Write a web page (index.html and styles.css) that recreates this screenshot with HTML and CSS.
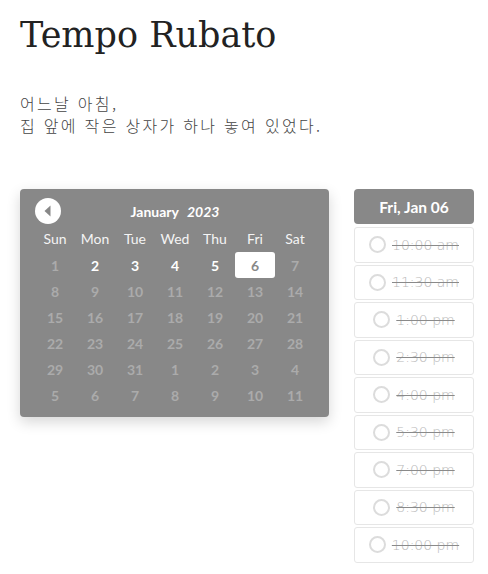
FILE: index.html
```html
<!DOCTYPE html>
<html lang="ko">
<head>
<meta charset="utf-8">
<title>Tempo Rubato</title>
<link rel="stylesheet" href="styles.css">
</head>
<body>
<div class="page">
  <h1 class="title">Tempo Rubato</h1>
  <p class="intro">어느날 아침,<br>집 앞에 작은 상자가 하나 놓여 있었다.</p>
  <div class="booking">
    <div class="calendar">
      <div class="cal-head">
        <button class="nav-btn" aria-label="Previous month">
          <svg width="26" height="26" viewBox="0 0 26 26"><circle cx="13" cy="13" r="13" fill="#fff"/><path d="M15.5 7.5 L9.5 13 L15.5 18.5 Z" fill="#888"/></svg>
        </button>
        <div class="month"><span class="m-name">January</span><span class="m-year">2023</span></div>
      </div>
      <div class="grid">
        <div class="wd">Sun</div><div class="wd">Mon</div><div class="wd">Tue</div><div class="wd">Wed</div><div class="wd">Thu</div><div class="wd">Fri</div><div class="wd">Sat</div>
        <div class="d off">1</div><div class="d on">2</div><div class="d on">3</div><div class="d on">4</div><div class="d on">5</div><div class="d sel"><span>6</span></div><div class="d off">7</div>
        <div class="d off">8</div><div class="d off">9</div><div class="d off">10</div><div class="d off">11</div><div class="d off">12</div><div class="d off">13</div><div class="d off">14</div>
        <div class="d off">15</div><div class="d off">16</div><div class="d off">17</div><div class="d off">18</div><div class="d off">19</div><div class="d off">20</div><div class="d off">21</div>
        <div class="d off">22</div><div class="d off">23</div><div class="d off">24</div><div class="d off">25</div><div class="d off">26</div><div class="d off">27</div><div class="d off">28</div>
        <div class="d off">29</div><div class="d off">30</div><div class="d off">31</div><div class="d off">1</div><div class="d off">2</div><div class="d off">3</div><div class="d off">4</div>
        <div class="d off">5</div><div class="d off">6</div><div class="d off">7</div><div class="d off">8</div><div class="d off">9</div><div class="d off">10</div><div class="d off">11</div>
      </div>
    </div>
    <div class="slots">
      <div class="slot-head">Fri, Jan 06</div>
      <div class="slot"><span class="radio"></span><span class="time">10:00 am</span></div>
      <div class="slot"><span class="radio"></span><span class="time">11:30 am</span></div>
      <div class="slot"><span class="radio"></span><span class="time">1:00 pm</span></div>
      <div class="slot"><span class="radio"></span><span class="time">2:30 pm</span></div>
      <div class="slot"><span class="radio"></span><span class="time">4:00 pm</span></div>
      <div class="slot"><span class="radio"></span><span class="time">5:30 pm</span></div>
      <div class="slot"><span class="radio"></span><span class="time">7:00 pm</span></div>
      <div class="slot"><span class="radio"></span><span class="time">8:30 pm</span></div>
      <div class="slot"><span class="radio"></span><span class="time">10:00 pm</span></div>
    </div>
  </div>
</div>
</body>
</html>
```
FILE: styles.css
```css
html, body {
  margin: 0;
  padding: 0;
  background: #fff;
}
.page {
  padding: 13px 0 0 20px;
}
.title {
  margin: 0;
  font-family: "DejaVu Serif", serif;
  font-weight: normal;
  font-size: 35px;
  line-height: 44px;
  color: #222;
}
.intro {
  margin: 35px 0 0 0;
  font-family: "Noto Sans CJK KR", sans-serif;
  font-weight: 300;
  font-size: 16px;
  line-height: 22px;
  letter-spacing: 2.3px;
  color: #444;
}
.booking {
  display: flex;
  align-items: flex-start;
  gap: 25px;
  margin-top: 53px;
}
.calendar {
  width: 309px;
  flex-shrink: 0;
  box-sizing: border-box;
  padding: 9px 14px 9px 15px;
  background: #888;
  border-radius: 4px;
  box-shadow: 0 5px 14px rgba(0, 0, 0, 0.16);
  font-family: "Lato", sans-serif;
  color: #fff;
}
.cal-head {
  position: relative;
  height: 26px;
  display: flex;
  align-items: center;
  justify-content: center;
}
.nav-btn {
  position: absolute;
  left: 0;
  top: 0;
  width: 26px;
  height: 26px;
  padding: 0;
  border: 0;
  background: none;
  display: block;
}
.nav-btn svg { display: block; }
.month {
  font-size: 14px;
  font-weight: 700;
  display: flex;
  gap: 8px;
}
.m-year { font-style: italic; }
.grid {
  display: grid;
  grid-template-columns: repeat(7, 40px);
  grid-template-rows: 28px;
  grid-auto-rows: 26px;
}
.wd, .d {
  display: flex;
  align-items: center;
  justify-content: center;
  font-size: 14px;
}
.wd {
  font-weight: 400;
  color: #f4f4f4;
}
.d { font-weight: 700; }
.d.off { color: #ababab; }
.d.on { color: #fff; }
.d.sel {
  background: #fff;
  color: #888;
  border-radius: 3px;
}
.slots {
  width: 120px;
  flex-shrink: 0;
  display: flex;
  flex-direction: column;
  gap: 2px;
}
.slot-head {
  height: 35px;
  margin-bottom: 1px;
  background: #888;
  border-radius: 4px;
  color: #fff;
  font-family: "Lato", sans-serif;
  font-weight: 700;
  font-size: 15.5px;
  display: flex;
  align-items: center;
  justify-content: center;
}
.slot {
  height: 35.5px;
  box-sizing: border-box;
  border: 1px solid #e6e6e6;
  border-radius: 3px;
  display: flex;
  align-items: center;
  justify-content: center;
  gap: 6px;
}
.radio {
  width: 17px;
  height: 17px;
  box-sizing: border-box;
  border: 2px solid #dcdcdc;
  border-radius: 50%;
}
.time {
  font-family: "DejaVu Sans", sans-serif;
  font-weight: 200;
  font-size: 14px;
  color: #b9b9b9;
  text-decoration: line-through;
  text-decoration-color: #8a8a8a;
}
```
